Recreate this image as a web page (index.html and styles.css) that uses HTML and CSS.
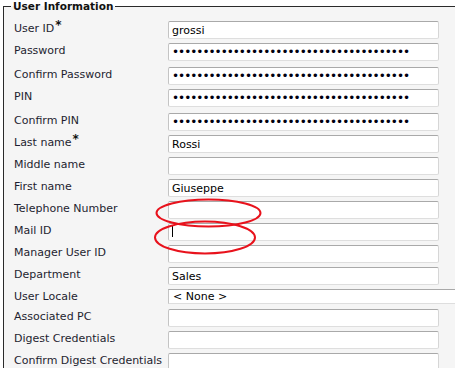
FILE: index.html
```html
<!DOCTYPE html>
<html lang="en">
<head>
    <meta charset="UTF-8">
    <meta name="viewport" content="width=device-width, initial-scale=1.0">
    <title>User Information</title>
    <link rel="stylesheet" href="styles.css">
</head>
<body>
    <fieldset class="user-info">
        <legend>User Information</legend>
        <div class="row">
            <label>User ID<sup class="req">*</sup></label>
            <input type="text" value="grossi">
        </div>
        <div class="row tall">
            <label>Password</label>
            <input type="password" class="pw" value="aaaaaaaaaaaaaaaaaaaaaaaaaaaaaaaaaaaaaaa">
        </div>
        <div class="row">
            <label>Confirm Password</label>
            <input type="password" class="pw" value="aaaaaaaaaaaaaaaaaaaaaaaaaaaaaaaaaaaaaaa">
        </div>
        <div class="row tall">
            <label>PIN</label>
            <input type="password" class="pw" value="aaaaaaaaaaaaaaaaaaaaaaaaaaaaaaaaaaaaaaa">
        </div>
        <div class="row">
            <label>Confirm PIN</label>
            <input type="password" class="pw" value="aaaaaaaaaaaaaaaaaaaaaaaaaaaaaaaaaaaaaaa">
        </div>
        <div class="row">
            <label>Last name<sup class="req">*</sup></label>
            <input type="text" value="Rossi">
        </div>
        <div class="row">
            <label>Middle name</label>
            <input type="text" value="">
        </div>
        <div class="row">
            <label>First name</label>
            <input type="text" value="Giuseppe">
        </div>
        <div class="row">
            <label>Telephone Number</label>
            <input type="text" value="">
        </div>
        <div class="row">
            <label>Mail ID</label>
            <div class="field">
                <input type="text" value="">
                <span class="caret"></span>
            </div>
        </div>
        <div class="row">
            <label>Manager User ID</label>
            <input type="text" value="">
        </div>
        <div class="row">
            <label>Department</label>
            <input type="text" value="Sales">
        </div>
        <div class="row short">
            <label>User Locale</label>
            <select>
                <option>&lt; None &gt;</option>
            </select>
        </div>
        <div class="row">
            <label>Associated PC</label>
            <input type="text" value="">
        </div>
        <div class="row">
            <label>Digest Credentials</label>
            <input type="password" value="">
        </div>
        <div class="row">
            <label>Confirm Digest Credentials</label>
            <input type="password" value="">
        </div>
    </fieldset>

    <!-- hand drawn marks over the two empty fields -->
    <svg class="marks" width="455" height="368" viewBox="0 0 455 368">
        <ellipse cx="208.5" cy="213" rx="52" ry="13.5" fill="none" stroke="#e8121c" stroke-width="2"/>
        <ellipse cx="205" cy="237.5" rx="50" ry="16" fill="none" stroke="#e8121c" stroke-width="2"/>
    </svg>
</body>
</html>
```

FILE: styles.css
```css
body {
    margin: 0;
    background: #ffffff;
    font-family: 'DejaVu Sans', Verdana, sans-serif;
    font-size: 11px;
    color: #1e1e30;
    overflow: hidden;
    position: relative;
    height: 368px;
}
.user-info {
    margin: 0 0 0 3px;
    padding: 7px 0 0 10px;
    width: 460px;
    height: 368px;
    overflow: hidden;
    border: 1px solid #2a2a2a;
    border-right: none;
    border-bottom: none;
    background: #f5f5f5;
    box-sizing: border-box;
}
.user-info legend {
    margin-left: -3px;
    padding: 0 2px;
    font-size: 10.5px;
    font-weight: bold;
    line-height: 13px;
    color: #111;
}
.row {
    display: flex;
    align-items: flex-start;
    height: 22px;
}
.row.tall {
    height: 24px;
}
.row.short {
    height: 20px;
}
.row label {
    flex: 0 0 154px;
    padding-top: 2px;
    line-height: 13px;
    white-space: nowrap;
}
.req {
    font-size: 12px;
    font-weight: bold;
    line-height: 0;
    vertical-align: 3px;
    margin-left: 1px;
    color: #111;
}
input {
    margin: 1px 0 0;
    width: 271px;
    flex: 0 0 271px;
    height: 18px;
    box-sizing: border-box;
    padding: 0 3px;
    border: 1px solid;
    border-color: #a9a9a9 #d6d6d6 #dedede #c4c4c4;
    border-radius: 2px;
    background: #ffffff;
    font-family: 'DejaVu Sans', Verdana, sans-serif;
    font-size: 11px;
    color: #000;
    outline: none;
}
.pw {
    font-size: 12px;
    letter-spacing: -1px;
    color: #000010;
}
.field {
    position: relative;
}
.caret {
    position: absolute;
    left: 4px;
    top: 4px;
    width: 1px;
    height: 11px;
    background: #000;
}
select {
    -webkit-appearance: none;
    appearance: none;
    margin: 1px 0 0;
    flex: 0 0 300px;
    height: 15px;
    box-sizing: border-box;
    padding: 0 4px;
    border: 1px solid;
    border-color: #a9a9a9 #d6d6d6 #dedede #c4c4c4;
    border-radius: 0;
    background: #ffffff;
    font-family: 'DejaVu Sans', Verdana, sans-serif;
    font-size: 11px;
    line-height: 13px;
    color: #000;
}
.marks {
    position: absolute;
    top: 0;
    left: 0;
    pointer-events: none;
}
```
